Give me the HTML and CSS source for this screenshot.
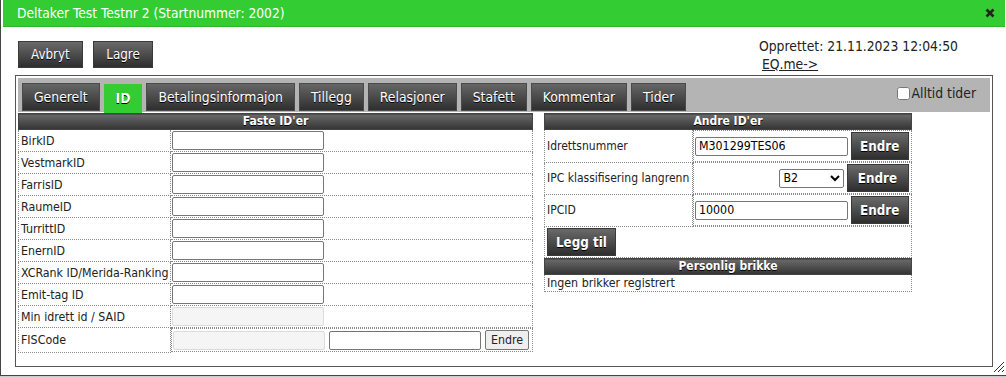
FILE: index.html
```html
<!DOCTYPE html>
<html lang="no">

<head>
    <meta charset="UTF-8">
    <title>Deltaker</title>
    <link rel="stylesheet" href="styles.css">
</head>

<body>
    <div class="dialog">
        <div class="titlebar">
            <span class="title">Deltaker Test Testnr 2 (Startnummer: 2002)</span>
            <span class="close">
                <svg width="10" height="10" viewBox="0 0 10 10">
                    <path d="M1.5 1.5 L8.5 8.5 M8.5 1.5 L1.5 8.5" stroke="#222" stroke-width="2.6" />
                </svg>
            </span>
        </div>

        <div class="content">
            <div class="topline">
                <div class="actions">
                    <button class="knapp">Avbryt</button>
                    <button class="knapp">Lagre</button>
                </div>
                <div class="info">
                    <div>Opprettet: 21.11.2023 12:04:50</div>
                    <a href="#" class="eqlink">EQ.me-&gt;</a>
                </div>
            </div>

            <div class="tabs">
                <div class="tabbar">
                    <a href="#" class="tab">Generelt</a>
                    <a href="#" class="tab aktiv">ID</a>
                    <a href="#" class="tab">Betalingsinformajon</a>
                    <a href="#" class="tab">Tillegg</a>
                    <a href="#" class="tab">Relasjoner</a>
                    <a href="#" class="tab">Stafett</a>
                    <a href="#" class="tab">Kommentar</a>
                    <a href="#" class="tab">Tider</a>
                    <label class="alltid"><input type="checkbox">Alltid tider</label>
                </div>

                <div class="panel">
                    <table class="idtabell faste">
                        <tr><th colspan="2">Faste ID'er</th></tr>
                        <tr><td class="lbl">BirkID</td><td><input type="text"></td></tr>
                        <tr><td class="lbl">VestmarkID</td><td><input type="text"></td></tr>
                        <tr><td class="lbl">FarrisID</td><td><input type="text"></td></tr>
                        <tr><td class="lbl">RaumeID</td><td><input type="text"></td></tr>
                        <tr><td class="lbl">TurrittID</td><td><input type="text"></td></tr>
                        <tr><td class="lbl">EnernID</td><td><input type="text"></td></tr>
                        <tr><td class="lbl">XCRank ID/Merida-Ranking</td><td><input type="text"></td></tr>
                        <tr><td class="lbl">Emit-tag ID</td><td><input type="text"></td></tr>
                        <tr><td class="lbl">Min idrett id / SAID</td><td><input type="text" disabled></td></tr>
                        <tr>
                            <td class="lbl">FISCode</td>
                            <td class="fis">
                                <input type="text" disabled>
                                <input type="text" class="fiskode">
                                <button class="liten">Endre</button>
                            </td>
                        </tr>
                    </table>

                    <div class="hoyre">
                        <table class="idtabell andre">
                            <colgroup>
                                <col class="labelkol">
                                <col>
                            </colgroup>
                            <tr><th colspan="2">Andre ID'er</th></tr>
                            <tr>
                                <td class="lbl">Idrettsnummer</td>
                                <td class="felt"><input type="text" value="M301299TES06"><button class="knapp fet">Endre</button></td>
                            </tr>
                            <tr>
                                <td class="lbl">IPC klassifisering langrenn</td>
                                <td class="felt">
                                    <select>
                                        <option>B2</option>
                                    </select><button class="knapp fet">Endre</button>
                                </td>
                            </tr>
                            <tr>
                                <td class="lbl">IPCID</td>
                                <td class="felt"><input type="text" value="10000"><button class="knapp fet">Endre</button></td>
                            </tr>
                            <tr>
                                <td class="lbl" colspan="2"><button class="knapp fet legg">Legg til</button></td>
                            </tr>
                        </table>

                        <table class="idtabell brikke">
                            <tr><th>Personlig brikke</th></tr>
                            <tr><td class="lbl">Ingen brikker registrert</td></tr>
                        </table>
                    </div>
                </div>
            </div>
        </div>

        <svg class="resize" width="12" height="12" viewBox="0 0 12 12">
            <path d="M11 1 L1 11 M11 5 L5 11 M11 9 L9 11" stroke="#333" stroke-width="1" />
        </svg>
    </div>
    <div class="underside"></div>
</body>

</html>
```

FILE: styles.css
```css
body {
    margin: 0;
    font-family: "DejaVu Sans Condensed", "DejaVu Sans", sans-serif;
    font-size: 12.3px;
    color: #222;
    background-color: #fff;
}

.dialog {
    position: relative;
    width: 1002px;
    height: 375px;
    padding: 0 2px;
    border: 1px solid #444;
    border-top: 0;
    background-color: #fff;
}

.titlebar {
    display: flex;
    justify-content: space-between;
    align-items: center;
    height: 26px;
    padding: 0 10px 0 14px;
    background-color: #33cc33;
    border-bottom: 1px solid #2fb52f;
}

.title {
    color: #fff;
    font-size: 13.7px;
}

.close svg {
    display: block;
}

.content {
    padding: 0 12px;
}

.topline {
    display: flex;
    justify-content: space-between;
    height: 48px;
}

.actions {
    padding: 14px 0 0 3px;
}

.knapp {
    height: 27px;
    padding: 0 12px;
    margin-right: 7px;
    font-family: inherit;
    font-size: 13.3px;
    color: #fff;
    background: linear-gradient(#6a6a6a, #2e2e2e);
    border: 1px solid #3a3a3a;
    text-shadow: 0 1px 0 #000;
}

.info {
    padding: 10px 35px 0 0;
    font-size: 13.8px;
    line-height: 18px;
    color: #222;
}

.eqlink {
    color: #222;
    margin-left: 3px;
}

.tabs {
    height: 286px;
    padding: 2px;
    border: 1px solid #555;
}

.tabbar {
    display: flex;
    align-items: flex-start;
    height: 29px;
    padding: 5px 4px 0 4px;
    background-color: #b4b4b4;
}

.tab {
    height: 26px;
    line-height: 26px;
    padding: 0 11px;
    margin-right: 4px;
    font-size: 13.8px;
    color: #fff;
    text-decoration: none;
    background: linear-gradient(#666, #2f2f2f);
    border: 1px solid #4a4a4a;
    text-shadow: 0 1px 0 #000;
}

.tab.aktiv {
    margin-top: 1px;
    height: 27px;
    background: #33cc33;
    border-color: #33cc33;
    font-weight: bold;
}

.alltid {
    display: flex;
    align-items: center;
    margin-left: auto;
    margin-top: 2px;
    padding-right: 10px;
    font-size: 13.8px;
    color: #222;
}

.alltid input {
    margin: 0 2px 0 0;
    width: 13px;
    height: 13px;
}

.panel {
    display: flex;
    align-items: flex-start;
    gap: 11px;
    padding-top: 1px;
}

.idtabell {
    border-collapse: collapse;
}

.idtabell th {
    height: 15px;
    padding: 0;
    font-size: 12px;
    line-height: 15px;
    color: #fff;
    background: linear-gradient(#6a6a6a, #333);
    border: 1px solid #444;
    text-shadow: 0 1px 0 #000;
}

.idtabell td {
    padding: 1px;
    border: 1px dotted #8a8a8a;
}

.idtabell td.lbl {
    padding-left: 2px;
    white-space: nowrap;
}

.faste {
    width: 515px;
}

.faste td.lbl {
    width: 148px;
}

.idtabell input {
    box-sizing: border-box;
    display: block;
    width: 152px;
    height: 19px;
    margin: 0;
    padding: 0 3px;
    font-family: inherit;
    font-size: 12.3px;
    border: 1px solid #777;
    border-radius: 2px;
}

.idtabell input:disabled {
    background-color: #f5f5f5;
    border-color: #dcdcdc;
}

.fis {
    display: flex;
    align-items: center;
}

.fis .fiskode {
    margin-left: 4px;
}

.liten {
    height: 20px;
    margin-left: 4px;
    padding: 0 5px;
    font-family: inherit;
    font-size: 12.3px;
    color: #222;
    background-color: #efefef;
    border: 1px solid #777;
    border-radius: 2px;
}

.andre,
.brikke {
    width: 368px;
    table-layout: fixed;
}

.andre {
    font-size: 12px;
}

.labelkol {
    width: 148px;
}

.andre td.lbl {
    overflow: hidden;
}

.felt {
    display: flex;
    align-items: center;
    justify-content: flex-end;
    height: 28px;
}

.felt input {
    width: 153px;
    margin-right: 3px;
}

.felt select {
    width: 65px;
    height: 19px;
    margin-right: 3px;
    font-family: inherit;
    font-size: 12.3px;
    border: 1px solid #777;
    border-radius: 2px;
    background-color: #fff;
}

.knapp.fet {
    height: 28px;
    margin-right: 1px;
    font-weight: bold;
    font-size: 13.3px;
}

.felt .knapp.fet {
    width: 62px;
    padding: 0;
}

.legg {
    margin: 0;
    padding: 0 8px;
}

.brikke {
    margin-top: 0;
}

.resize {
    position: absolute;
    right: 2px;
    bottom: 2px;
}

.underside {
    height: 1px;
    background-color: #ccc;
}
```
